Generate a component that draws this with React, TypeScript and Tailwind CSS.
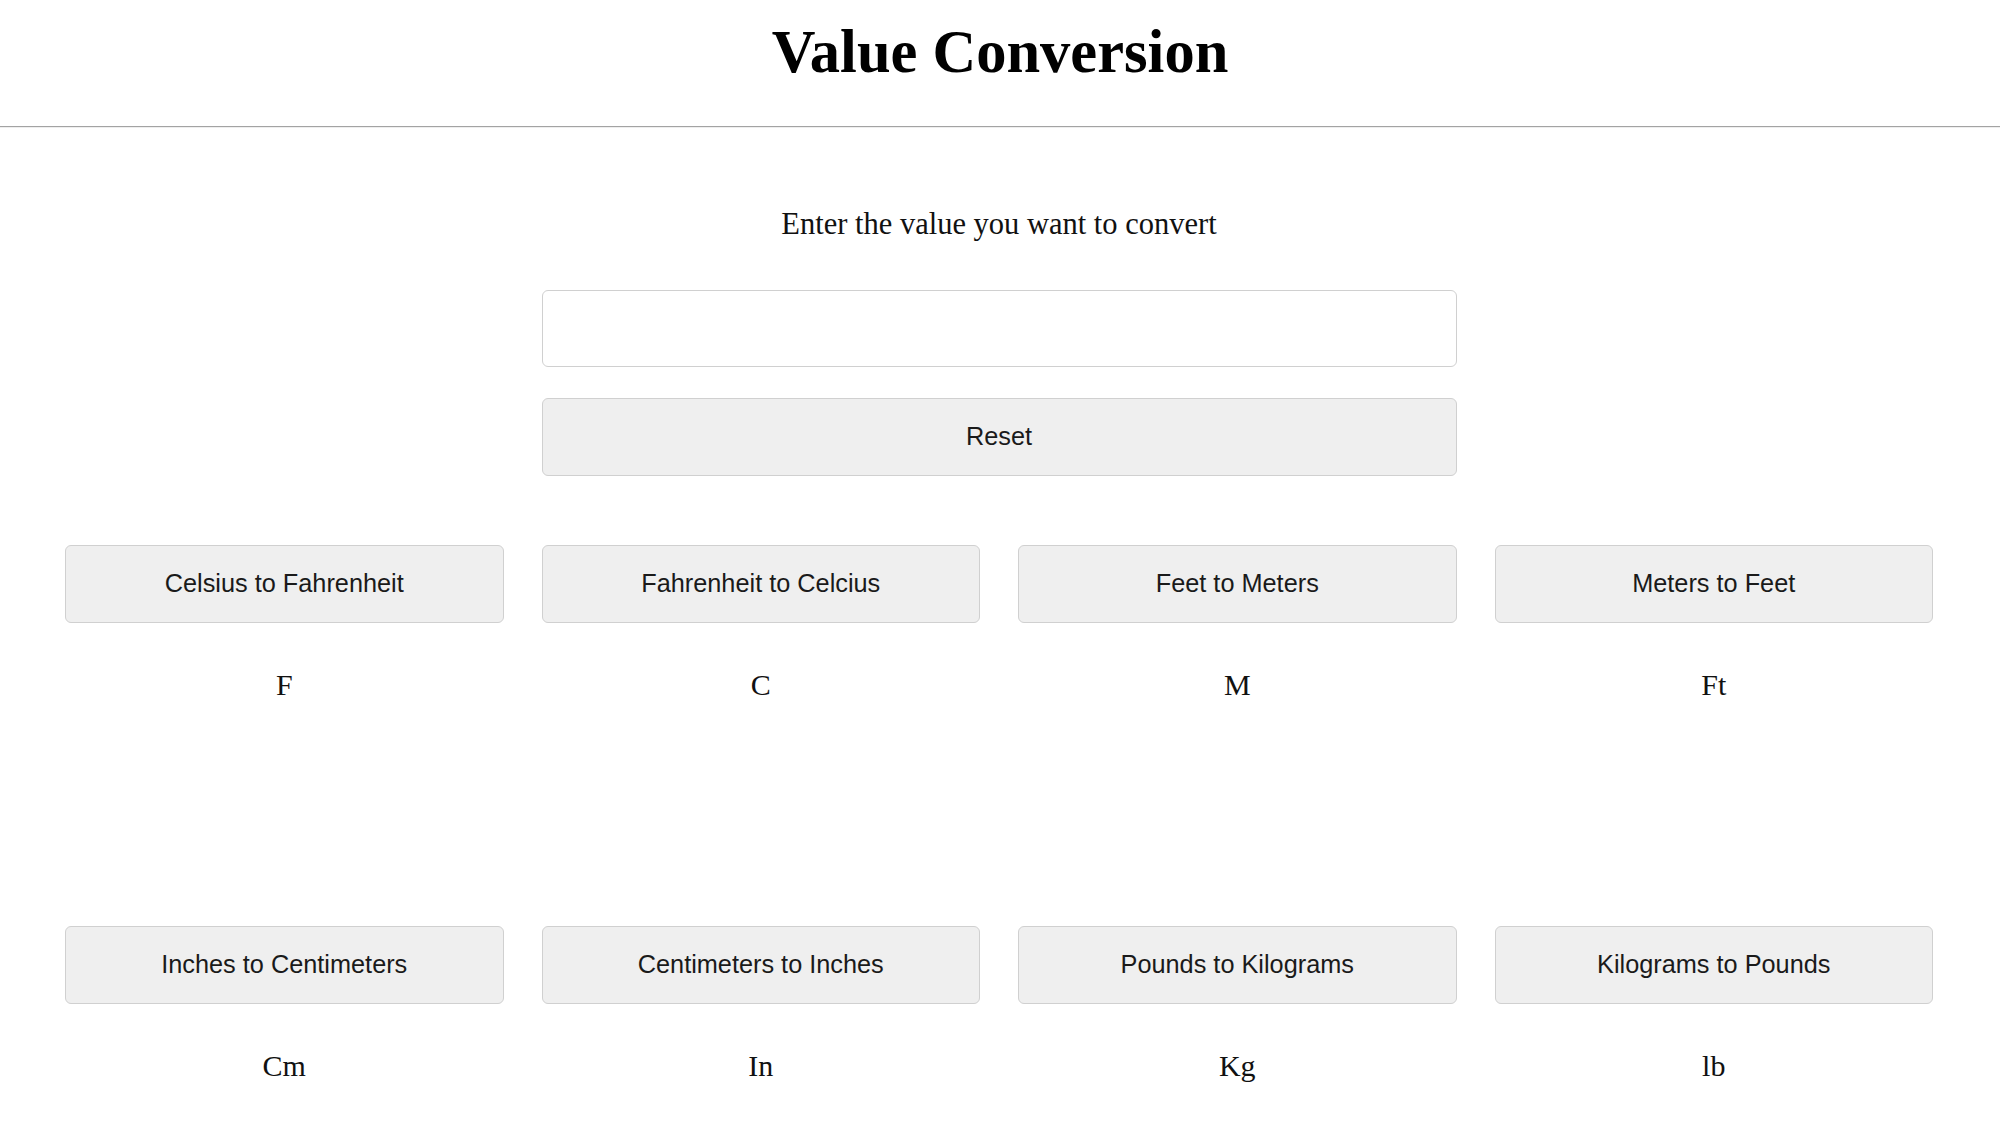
import { useState } from 'react'

type Conversion = {
  label: string
  unit: string
  convert: (v: number) => number
}

const conversions: Conversion[] = [
  { label: 'Celsius to Fahrenheit', unit: 'F', convert: (v) => (v * 9) / 5 + 32 },
  { label: 'Fahrenheit to Celcius', unit: 'C', convert: (v) => ((v - 32) * 5) / 9 },
  { label: 'Feet to Meters', unit: 'M', convert: (v) => v * 0.3048 },
  { label: 'Meters to Feet', unit: 'Ft', convert: (v) => v / 0.3048 },
  { label: 'Inches to Centimeters', unit: 'Cm', convert: (v) => v * 2.54 },
  { label: 'Centimeters to Inches', unit: 'In', convert: (v) => v / 2.54 },
  { label: 'Pounds to Kilograms', unit: 'Kg', convert: (v) => v * 0.45359237 },
  { label: 'Kilograms to Pounds', unit: 'lb', convert: (v) => v / 0.45359237 },
]

const serif = "font-['Liberation_Serif','Times_New_Roman',serif]"
const sans = "font-['Liberation_Sans',Arial,sans-serif]"

export default function App() {
  const [value, setValue] = useState('')
  const [results, setResults] = useState<Record<number, string>>({})

  const run = (i: number) => {
    const n = parseFloat(value)
    if (Number.isNaN(n)) return
    setResults((r) => ({ ...r, [i]: conversions[i].convert(n).toFixed(2) }))
  }

  const reset = () => {
    setValue('')
    setResults({})
  }

  return (
    <div className={`min-h-screen bg-white text-black ${serif}`}>
      <header className="pt-[22px]">
        <h1 className="text-center text-[60.5px] font-bold leading-[60px]">Value Conversion</h1>
        <div className="mt-[44px] border-t border-b border-t-[#a3a3a3] border-b-[#eeeeee]" />
      </header>

      <main className="pl-[65px] pr-[67px]">
        <p className="mt-[81px] text-center text-[30.5px] leading-none text-[#111]">
          Enter the value you want to convert
        </p>

        <div className="mt-[50px] grid grid-cols-4 gap-x-[38px]">
          <div className="col-span-2 col-start-2 flex flex-col gap-[31px]">
            <input
              type="text"
              value={value}
              onChange={(e) => setValue(e.target.value)}
              className={`h-[77px] w-full rounded-[6px] border border-[#d0d0d0] bg-white px-4 text-[25px] outline-none ${sans}`}
            />
            <button
              onClick={reset}
              className={`h-[78px] w-full rounded-[6px] border border-[#d0d0d0] bg-[#efefef] text-[25.3px] text-[#1a1a1a] ${sans}`}
            >
              Reset
            </button>
          </div>
        </div>

        <div className="mt-[69px] grid grid-cols-4 gap-x-[38px] gap-y-[226px]">
          {conversions.map((c, i) => (
            <div key={c.label} className="flex flex-col items-center">
              <button
                onClick={() => run(i)}
                className={`h-[78px] w-full rounded-[6px] border border-[#d0d0d0] bg-[#efefef] text-[25.3px] text-[#1a1a1a] ${sans}`}
              >
                {c.label}
              </button>
              <p className="mt-[47px] h-[30px] text-[30px] leading-none text-[#111]">
                {results[i] ? `${results[i]} ` : ''}
                {c.unit}
              </p>
            </div>
          ))}
        </div>
      </main>
    </div>
  )
}
